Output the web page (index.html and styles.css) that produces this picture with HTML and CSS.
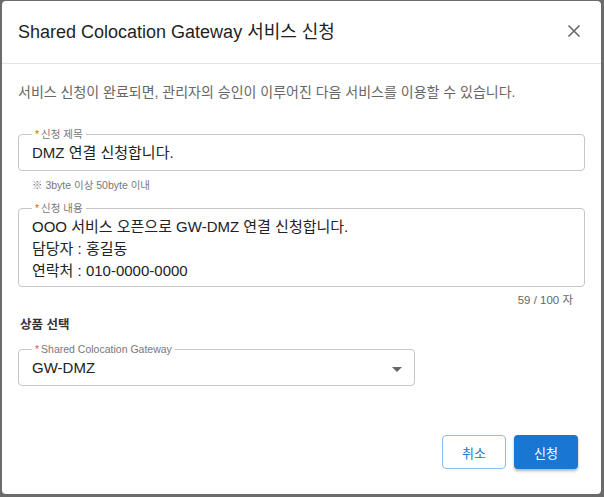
FILE: index.html
```html
<!DOCTYPE html>
<html lang="ko">
<head>
<meta charset="utf-8">
<link rel="stylesheet" href="styles.css">
</head>
<body>
<div class="dialog">
  <div class="header">
    <h1 class="title">Shared Colocation Gateway 서비스 신청</h1>
    <button class="close" aria-label="닫기">
      <svg width="14" height="14" viewBox="0 0 14 14"><path d="M1.5 1.5L12.5 12.5M12.5 1.5L1.5 12.5" stroke="#666" stroke-width="1.6" fill="none"/></svg>
    </button>
  </div>
  <div class="content">
    <p class="desc">서비스 신청이 완료되면, 관리자의 승인이 이루어진 다음 서비스를 이용할 수 있습니다.</p>

    <div class="field field-title">
      <span class="label"><span class="req">*</span>신청 제목</span>
      <div class="value">DMZ 연결 신청합니다.</div>
    </div>
    <div class="helper">※ 3byte 이상 50byte 이내</div>

    <div class="field field-body">
      <span class="label"><span class="req">*</span>신청 내용</span>
      <div class="value multi">OOO 서비스 오픈으로 GW-DMZ 연결 신청합니다.<br>담당자 : 홍길동<br>연락처 : 010-0000-0000</div>
    </div>
    <div class="counter">59 / 100 자</div>

    <div class="section">상품 선택</div>
    <div class="field field-select">
      <span class="label"><span class="req">*</span>Shared Colocation Gateway</span>
      <div class="value">GW-DMZ</div>
      <span class="caret"></span>
    </div>
  </div>
  <div class="footer">
    <button class="btn btn-outline">취소</button>
    <button class="btn btn-primary">신청</button>
  </div>
</div>
</body>
</html>
```
FILE: styles.css
```css
html, body {
  margin: 0;
  padding: 0;
  height: 100%;
}
body {
  background: #6b6b6b;
  font-family: "Liberation Sans", "Noto Sans CJK KR", sans-serif;
  overflow: hidden;
}
.dialog {
  margin: 1px 3px 0 2px;
  height: 493px;
  background: #fff;
  border-radius: 4px;
  display: flex;
  flex-direction: column;
  box-sizing: border-box;
}
.header {
  height: 63px;
  flex: none;
  display: flex;
  align-items: center;
  justify-content: space-between;
  padding: 0 16px 1px 16px;
  box-sizing: border-box;
  border-bottom: 1px solid #e3e3e3;
}
.title {
  margin: 0;
  font-size: 18px;
  font-weight: 400;
  color: #1f1f1f;
  line-height: 24px;
}
.close {
  border: 0;
  background: none;
  padding: 0;
  margin-right: 4px;
  margin-bottom: 2px;
  width: 14px;
  height: 14px;
  display: flex;
}
.content {
  padding: 18px 16px 0 16px;
  display: flex;
  flex-direction: column;
}
.desc {
  margin: 0;
  font-size: 14px;
  line-height: 20px;
  color: #666;
}
.field {
  position: relative;
  border: 1px solid #c6c6c6;
  border-radius: 4px;
  box-sizing: border-box;
}
.label {
  position: absolute;
  left: 13px;
  top: -7px;
  padding: 0 3px;
  background: #fff;
  font-size: 10.5px;
  line-height: 12px;
  color: #777;
  white-space: nowrap;
}
.req {
  color: #e8650c;
  margin-right: 2px;
}
.value {
  font-size: 15px;
  line-height: 20px;
  color: #222;
}
.field-title {
  margin-top: 32px;
  height: 37px;
  display: flex;
  align-items: center;
  padding: 1px 13px 0;
}
.helper {
  margin-top: 7px;
  padding-left: 14px;
  font-size: 10.5px;
  line-height: 14px;
  color: #777;
}
.field-body {
  margin-top: 16px;
  height: 79px;
  padding: 7px 13px 5px;
}
.multi {
  line-height: 22px;
}
.counter {
  margin-top: 6px;
  text-align: right;
  padding-right: 12px;
  font-size: 11.5px;
  line-height: 14px;
  color: #666;
}
.section {
  margin-top: 9px;
  padding-left: 2px;
  font-size: 12.5px;
  line-height: 18px;
  font-weight: 700;
  color: #333;
}
.field-select {
  margin-top: 15px;
  width: 397px;
  height: 37px;
  display: flex;
  align-items: center;
  padding: 1px 13px 0;
}
.caret {
  position: absolute;
  right: 12px;
  top: 17px;
  width: 0;
  height: 0;
  border-left: 5px solid transparent;
  border-right: 5px solid transparent;
  border-top: 5px solid #666;
}
.footer {
  margin-top: auto;
  display: flex;
  justify-content: flex-end;
  gap: 8px;
  padding: 0 23px 25px 0;
}
.btn {
  width: 64px;
  height: 34px;
  border-radius: 4px;
  font-family: "Liberation Sans", "Noto Sans CJK KR", sans-serif;
  font-size: 13px;
  padding: 0;
  box-sizing: border-box;
}
.btn-outline {
  background: #fff;
  border: 1px solid #8fbbe6;
  color: #1976d2;
}
.btn-primary {
  background: #1976d2;
  border: 0;
  color: #fff;
  box-shadow: 0 2px 3px rgba(0,0,0,0.3);
}
```
